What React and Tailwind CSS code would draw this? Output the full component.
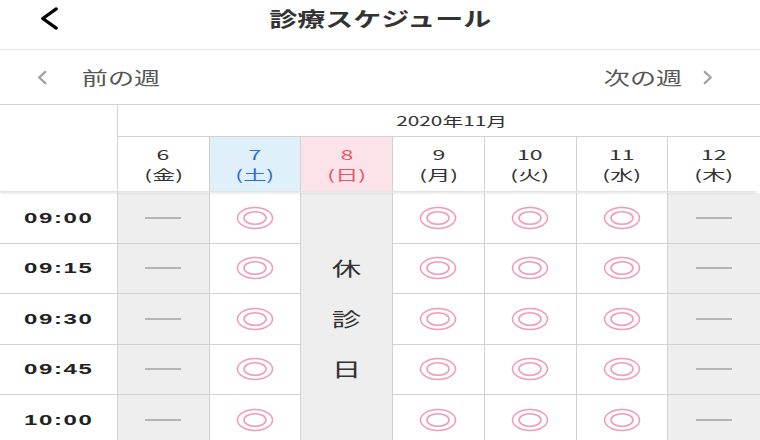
import React from "react";

const days = [
  { num: "6", wd: "金", tone: "closed" },
  { num: "7", wd: "土", tone: "sat" },
  { num: "8", wd: "日", tone: "sun" },
  { num: "9", wd: "月", tone: "open" },
  { num: "10", wd: "火", tone: "open" },
  { num: "11", wd: "水", tone: "open" },
  { num: "12", wd: "木", tone: "closed" },
];

const times = ["09:00", "09:15", "09:30", "09:45", "10:00"];

const headerTone = {
  closed: "bg-white text-[#333]",
  open: "bg-white text-[#333]",
  sat: "bg-[#dff0fb] text-[#2f6fd6]",
  sun: "bg-[#fce3e9] text-[#e9566b]",
};

const DoubleCircle = () => (
  <svg width="38" height="24" viewBox="0 0 38 24" aria-hidden="true">
    <ellipse cx="19" cy="12" rx="17.5" ry="10.5" fill="none" stroke="#f29bb9" strokeWidth="1.6" />
    <ellipse cx="19" cy="12" rx="11" ry="6.3" fill="none" stroke="#f29bb9" strokeWidth="1.6" />
  </svg>
);

const Dash = () => <div className="h-[2px] w-[36px] bg-[#b5b5b5]" />;

const Chevron = ({ dir = "left", className }) => (
  <svg className={className} viewBox="0 0 12 16" fill="none" aria-hidden="true">
    <path
      d={dir === "left" ? "M9.5 2 L3 8 L9.5 14" : "M2.5 2 L9 8 L2.5 14"}
      stroke="currentColor"
      strokeWidth="2.4"
      strokeLinecap="round"
      strokeLinejoin="round"
    />
  </svg>
);

export default function App() {
  return (
    <div className="h-[440px] w-[760px] overflow-hidden bg-white font-['Noto_Sans_CJK_JP','Noto_Sans',sans-serif]">
      <header className="grid h-[50px] grid-cols-[1fr_auto_1fr] items-center border-b border-[#e6e6e6] pb-[12px]">
        <div className="pl-[38px]">
          <svg className="h-[23px] w-[23px] text-black" viewBox="0 0 24 24" fill="none" aria-hidden="true">
            <path d="M19 2 L5 12 L19 22" stroke="currentColor" strokeWidth="3.4" strokeLinecap="round" strokeLinejoin="round" />
          </svg>
        </div>
        <h1 className="inline-block scale-x-[1.4] text-[20px] font-bold text-[#333]">診療スケジュール</h1>
        <div />
      </header>

      <nav className="flex h-[54px] items-center justify-between pl-[36px] pr-[46px] text-[#555]">
        <div className="flex items-center gap-[46px]">
          <Chevron dir="left" className="h-[15px] w-[12px] text-[#a0a0a0]" />
          <span className="inline-block scale-x-[1.45] text-[18px]">前の週</span>
        </div>
        <div className="flex items-center gap-[32px]">
          <span className="inline-block scale-x-[1.45] text-[18px]">次の週</span>
          <Chevron dir="right" className="h-[15px] w-[12px] text-[#a0a0a0]" />
        </div>
      </nav>

      <div className="relative z-10 grid grid-cols-[118px_repeat(7,1fr)] rounded-br-lg border-t border-[#d2d2d2] bg-white shadow-[0_2px_3px_rgba(0,0,0,0.13)]">
        <div className="row-span-2 border-r border-[#d2d2d2]" />
        <div className="col-span-7 flex h-[32px] items-center justify-center border-b border-[#d2d2d2] pl-[26px]">
          <span className="inline-block scale-x-[1.6] text-[13px] text-[#333]">2020年11月</span>
        </div>
        {days.map((d, i) => (
          <div
            key={d.num}
            className={`flex h-[54px] flex-col items-center justify-center leading-[20px] ${i < 6 ? "border-r border-[#d2d2d2]" : ""} ${headerTone[d.tone]}`}
          >
            <span className="inline-block scale-x-[1.65] text-[14px]">{d.num}</span>
            <span className="inline-block scale-x-[1.65] text-[14px]">({d.wd})</span>
          </div>
        ))}
      </div>

      <div className="mt-[2px] grid grid-cols-[118px_repeat(7,1fr)] auto-rows-[50.5px]">
        <div className="col-start-4 row-span-5 row-start-1 flex flex-col items-center justify-center border-b border-r border-[#d2d2d2] bg-[#eeeeee] text-[#333]">
          {["休", "診", "日"].map((c) => (
            <div key={c} className="flex h-[50.5px] items-center">
              <span className="inline-block scale-x-[1.55] text-[19px]">{c}</span>
            </div>
          ))}
        </div>
        {times.map((t) => (
          <React.Fragment key={t}>
            <div className="col-start-1 flex items-center justify-center border-b border-r border-[#d2d2d2]">
              <span className="inline-block scale-x-[1.6] font-['Liberation_Sans',sans-serif] text-[15px] font-bold tracking-[1px] text-[#222]">
                {t}
              </span>
            </div>
            {days.map((d, i) => {
              if (d.tone === "sun") return null;
              const closed = d.tone === "closed";
              return (
                <div
                  key={d.num}
                  className={`flex items-center justify-center border-b border-[#d2d2d2] ${i < 6 ? "border-r" : ""} ${closed ? "bg-[#eeeeee]" : "bg-white"}`}
                >
                  {closed ? <Dash /> : <DoubleCircle />}
                </div>
              );
            })}
          </React.Fragment>
        ))}
      </div>
    </div>
  );
}
